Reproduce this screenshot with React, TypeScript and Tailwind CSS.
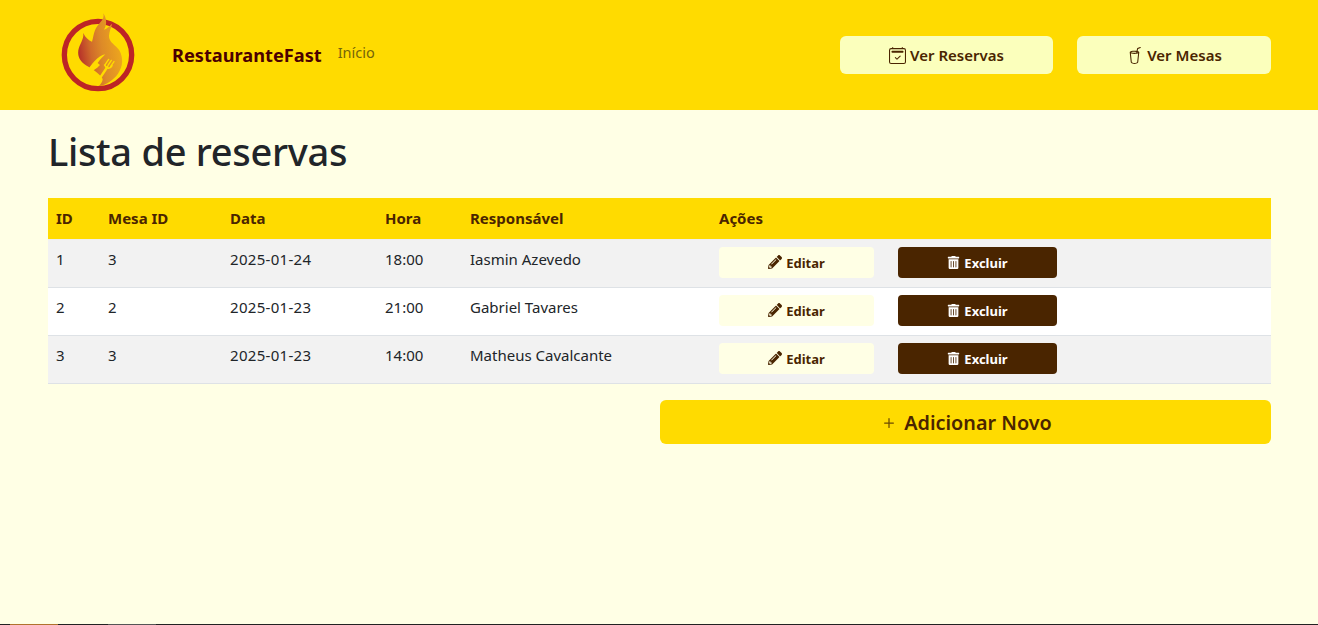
import { BsCalendar2Check, BsCupStraw, BsPlus } from "react-icons/bs";
import { FaPencilAlt, FaTrashAlt } from "react-icons/fa";

const reservas = [
  { id: 1, mesa: 3, data: "2025-01-24", hora: "18:00", nome: "Iasmin Azevedo" },
  { id: 2, mesa: 2, data: "2025-01-23", hora: "21:00", nome: "Gabriel Tavares" },
  { id: 3, mesa: 3, data: "2025-01-23", hora: "14:00", nome: "Matheus Cavalcante" },
];

function Logo() {
  return (
    <svg width="95" height="95" viewBox="0 0 285 285" className="shrink-0 mb-[5px]">
      <defs>
        <linearGradient id="flameFill" x1="0" y1="0.65" x2="1" y2="0.4">
          <stop offset="0" stopColor="#b32a2a" />
          <stop offset="0.3" stopColor="#d06a2a" />
          <stop offset="0.55" stopColor="#dd8a28" />
          <stop offset="1" stopColor="#efaa1c" />
        </linearGradient>
      </defs>
      <circle cx="144" cy="150" r="101" fill="none" stroke="#bd2426" strokeWidth="16" />
      <path
        d="M160 25 C166 46 142 56 135 76 C130 88 130 98 126 110 C116 106 106 98 100 84 C102 104 88 118 85 136 C82 156 92 172 110 182 C128 192 150 206 158 222 C158 230 152 238 147 243 C168 240 190 226 204 206 C220 184 220 158 208 136 C198 120 176 112 177 92 C178 78 184 68 186 56 C178 64 172 70 162 74 C172 60 170 40 160 25 Z"
        fill="url(#flameFill)"
      />
      {/* knife and fork cut out of the flame */}
      <path d="M166 148 C144 152 122 178 108 206 C126 200 140 192 150 180 L143 174 C150 164 158 156 166 148 Z" fill="#ffdb00" />
      <g stroke="#ffdb00" strokeLinecap="round" fill="none">
        <path d="M172 186 L152 216" strokeWidth="7" />
        <path d="M164 180 C168 190 180 194 186 182" strokeWidth="5" />
        <path d="M166 178 L176 163 M174 181 L184 166 M182 184 L192 170" strokeWidth="4" />
      </g>
    </svg>
  );
}

export default function App() {
  return (
    <div className="min-h-screen flex flex-col bg-[#ffffe5] text-[#212529] font-['Noto_Sans',sans-serif]">
      <header className="h-[110px] bg-[#ffdb00] pl-[50px] pr-[47px] flex items-center">
        <Logo />
        <span className="ml-[27px] mt-[2px] text-[18.2px] font-bold text-[#4b0000]">RestauranteFast</span>
        <a className="ml-4 mb-[5px] text-[14.5px] text-[#75650a]">Início</a>
        <div className="ml-auto flex gap-6">
          <button className="w-[213px] h-[38px] rounded-md bg-[#fbffbc] text-[#4a2500] font-semibold text-[15px] flex items-center justify-center gap-1">
            <BsCalendar2Check className="text-[17px]" /> Ver Reservas
          </button>
          <button className="w-[194px] h-[38px] rounded-md bg-[#fbffbc] text-[#4a2500] font-semibold text-[15px] flex items-center justify-center gap-1">
            <BsCupStraw className="text-[17px]" /> Ver Mesas
          </button>
        </div>
      </header>

      <main className="flex-1 pl-12 pr-[47px]">
        <h1 className="mt-[17px] mb-[23px] text-[38px] leading-[48px] tracking-[-0.3px] font-medium">Lista de reservas</h1>

        <table className="w-full table-fixed border-collapse text-[15px]">
          <colgroup>
            <col className="w-[52px]" />
            <col className="w-[122px]" />
            <col className="w-[155px]" />
            <col className="w-[85px]" />
            <col className="w-[249px]" />
            <col />
          </colgroup>
          <thead>
            <tr className="bg-[#ffdb00] text-[#4a2500] text-left h-[41px] border-b border-[#eeeeee]">
              <th className="px-2 font-bold">ID</th>
              <th className="px-2 font-bold">Mesa ID</th>
              <th className="px-2 font-bold">Data</th>
              <th className="px-2 font-bold">Hora</th>
              <th className="px-2 font-bold">Responsável</th>
              <th className="px-2 font-bold">Ações</th>
            </tr>
          </thead>
          <tbody>
            {reservas.map((r, i) => (
              <tr key={r.id} className={`border-b border-[#dee2e6] ${i % 2 === 0 ? "bg-[#f2f2f2]" : "bg-white"}`}>
                <td className="px-2 pt-[7px] pb-4 align-top leading-6">{r.id}</td>
                <td className="px-2 pt-[7px] pb-4 align-top leading-6">{r.mesa}</td>
                <td className="px-2 pt-[7px] pb-4 align-top leading-6 tracking-[0.3px]">{r.data}</td>
                <td className="px-2 pt-[7px] pb-4 align-top leading-6">{r.hora}</td>
                <td className="px-2 pt-[7px] pb-4 align-top leading-6">{r.nome}</td>
                <td className="px-2 pt-[7px] pb-[9px] align-top">
                  <div className="flex gap-6 text-[13px] font-bold">
                    <button className="w-[155px] h-[31px] pt-[3px] rounded bg-[#ffffe5] text-[#4a2500] flex items-center justify-center gap-1">
                      <FaPencilAlt className="text-[14px] -mt-[3px]" /> Editar
                    </button>
                    <button className="w-[159px] h-[31px] pt-[3px] rounded bg-[#4a2500] text-white flex items-center justify-center gap-1">
                      <FaTrashAlt className="text-[13px] -mt-[3px]" /> Excluir
                    </button>
                  </div>
                </td>
              </tr>
            ))}
          </tbody>
        </table>

        <div className="mt-4 flex justify-end">
          <button className="w-[611px] h-[44px] pt-[2px] rounded-md bg-[#ffdb00] text-[#4a2500] text-[19.8px] font-semibold flex items-center justify-center gap-[5px]">
            <BsPlus className="text-[20px] text-[#6b4a00]" /> Adicionar Novo
          </button>
        </div>
      </main>

      {/* sliver of the window behind, along the bottom edge */}
      <div className="h-px bg-[#222222] flex">
        <div className="ml-[10px] w-[48px] bg-[#b0722c]" />
        <div className="ml-[50px] w-[48px] bg-[#555555]" />
      </div>
    </div>
  );
}
